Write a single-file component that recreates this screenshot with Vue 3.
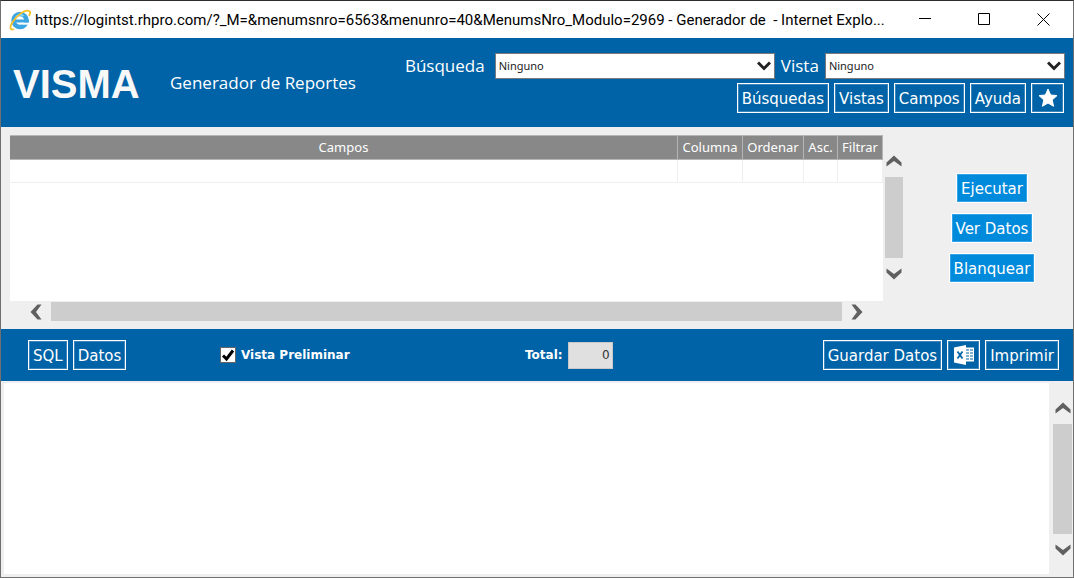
<script setup>
import { ref } from 'vue'

const busqueda = ref('Ninguno')
const vista = ref('Ninguno')
const preview = ref(true)
const total = ref('0')
const columns = ['Campos', 'Columna', 'Ordenar', 'Asc.', 'Filtrar']
</script>

<template>
  <div class="window">
    <header class="titlebar">
      <svg class="ie" viewBox="0 0 22 22" aria-hidden="true">
        <circle cx="11" cy="11.500" r="6.500" fill="none" stroke="#3aa5e0" stroke-width="4.500" />
        <path d="M6 12h14" stroke="#3aa5e0" stroke-width="3" />
        <path d="M13 14.700h8" stroke="#fff" stroke-width="2" />
        <path d="M6.500 9a5 5 0 0 1 8-2" fill="none" stroke="#9adcf8" stroke-width="1.500" />
        <path d="M5 20C2 22 0 19 3 14C7 7 16 0 20 2C22 3 21 5 20 7" fill="none" stroke="#f5c22b" stroke-width="1.800" />
      </svg>
      <h1 class="caption">https://logintst.rhpro.com/?_M=&amp;menumsnro=6563&amp;menunro=40&amp;MenumsNro_Modulo=2969 - Generador de&nbsp; - Internet Explo...</h1>
      <div class="controls">
        <button type="button" aria-label="Minimizar"><svg viewBox="0 0 13 13"><path d="M0 5.500h12" /></svg></button>
        <button type="button" aria-label="Maximizar"><svg viewBox="0 0 13 13"><path d="M.5.5h11v11H.5z" /></svg></button>
        <button type="button" aria-label="Cerrar"><svg viewBox="0 0 13 13"><path d="M.5.5l12 12M12.500.5l-12 12" /></svg></button>
      </div>
    </header>

    <section class="banner">
      <div class="logo">VISMA</div>
      <h2 class="title">Generador de Reportes</h2>
      <div class="pickers">
        <div class="selects">
          <label for="busqueda">Búsqueda</label>
          <div class="select wide">
            <select id="busqueda" v-model="busqueda"><option>Ninguno</option></select>
            <svg viewBox="0 0 14 10" aria-hidden="true"><path d="M1 1.500L7 7.500L13 1.500" /></svg>
          </div>
          <label for="vista">Vista</label>
          <div class="select">
            <select id="vista" v-model="vista"><option>Ninguno</option></select>
            <svg viewBox="0 0 14 10" aria-hidden="true"><path d="M1 1.500L7 7.500L13 1.500" /></svg>
          </div>
        </div>
        <nav class="actions">
          <button type="button" class="btn">Búsquedas</button>
          <button type="button" class="btn">Vistas</button>
          <button type="button" class="btn">Campos</button>
          <button type="button" class="btn">Ayuda</button>
          <button type="button" class="btn icon" aria-label="Favoritos">
            <svg viewBox="0 0 20 20"><path d="M10 1l2.600 6 6.400.6-4.800 4.300 1.400 6.400L10 15l-5.600 3.300 1.400-6.400L1 7.600 7.400 7z" fill="#fff" stroke="#fff" stroke-linejoin="round" /></svg>
          </button>
        </nav>
      </div>
    </section>

    <main class="work">
      <div class="grid">
        <div class="sheet">
          <table>
            <thead>
              <tr><th v-for="c in columns" :key="c" scope="col">{{ c }}</th></tr>
            </thead>
            <tbody>
              <tr><td v-for="c in columns" :key="c"></td></tr>
            </tbody>
          </table>
        </div>
        <div class="vbar">
          <svg viewBox="0 0 16 12"><path d="M.5 11.500V7.500L8 .5l7.500 7v4L8 6z" /></svg>
          <div class="thumb"></div>
          <svg viewBox="0 0 16 12"><path d="M.5.5v4l7.500 7 7.500-7v-4L8 6z" /></svg>
        </div>
        <div class="hbar">
          <svg viewBox="0 0 12 16"><path d="M11.500.5h-4L.5 8l7 7.500h4L6 8z" /></svg>
          <div class="thumb"></div>
          <svg viewBox="0 0 12 16"><path d="M.5.5h4l7 7.500-7 7.500h-4L6 8z" /></svg>
        </div>
      </div>
      <div class="side">
        <button type="button" class="btn bright">Ejecutar</button>
        <button type="button" class="btn bright">Ver Datos</button>
        <button type="button" class="btn bright">Blanquear</button>
      </div>
    </main>

    <section class="toolbar">
      <div class="group">
        <button type="button" class="btn">SQL</button>
        <button type="button" class="btn">Datos</button>
      </div>
      <div class="check">
        <span class="box">
          <input id="preview" v-model="preview" type="checkbox" />
          <svg v-if="preview" viewBox="0 0 16 16" aria-hidden="true"><path d="M3 8.500L6.500 12L13 3.500" /></svg>
        </span>
        <label for="preview">Vista Preliminar</label>
      </div>
      <div class="total">
        <label for="total">Total:</label>
        <input id="total" v-model="total" type="text" readonly />
      </div>
      <div class="group end">
        <button type="button" class="btn">Guardar Datos</button>
        <button type="button" class="btn icon" aria-label="Exportar a Excel">
          <svg viewBox="0 0 20 20">
            <path d="M0 2.500L12 0v20L0 17.500z" fill="#fff" />
            <path d="M3.500 6.500l5 7M8.500 6.500l-5 7" fill="none" stroke="#0063a7" stroke-width="1.800" />
            <path d="M12 3.500h8M12 6.500h8M12 9.500h8M12 12.500h8M12 15.500h8" fill="none" stroke="#fff" stroke-width="2" />
            <path d="M15.500 3v13M19.500 3v13" fill="none" stroke="#fff" />
          </svg>
        </button>
        <button type="button" class="btn">Imprimir</button>
      </div>
    </section>

    <section class="output">
      <div class="page"></div>
      <div class="vbar">
        <svg viewBox="0 0 16 12"><path d="M.5 11.500V7.500L8 .5l7.500 7v4L8 6z" /></svg>
        <div class="thumb"></div>
        <svg viewBox="0 0 16 12"><path d="M.5.5v4l7.500 7 7.500-7v-4L8 6z" /></svg>
      </div>
    </section>
  </div>
</template>

<style>
body {
  margin: 0;
}
</style>

<style scoped>
.window {
  display: flex;
  flex-direction: column;
  min-height: 100vh;
  box-sizing: border-box;
  border: 1px solid #707070;
  border-top-color: #2c2b30;
  background: #efefef;
  color: #fff;
  font-family: "DejaVu Sans", sans-serif;
  font-size: 15px;
}
.window * {
  box-sizing: border-box;
}
button,
input,
select {
  margin: 0;
  font: inherit;
}
svg {
  display: block;
  flex: none;
}
.titlebar {
  display: flex;
  align-items: center;
  height: 37px;
  padding-left: 8px;
  background: #fff;
  color: #000;
}
.ie {
  width: 22px;
  height: 22px;
}
.caption {
  flex: 1;
  min-width: 0;
  margin: 0 0 0 4px;
  overflow: hidden;
  font: 400 15px/20px Roboto, sans-serif;
  white-space: nowrap;
}
.controls {
  display: flex;
}
.controls button {
  display: grid;
  place-items: center;
  width: 59px;
  height: 36px;
  padding: 0;
  border: 0;
  background: none;
}
.controls svg {
  width: 13px;
  height: 13px;
  fill: none;
  stroke: #000;
}
.banner {
  display: flex;
  height: 89px;
  padding: 15px 8px 0 12px;
  background: #0063a7;
}
.logo {
  width: 126px;
  margin-top: 6px;
  color: #f8f8f8;
  font: 700 40px/50px "Liberation Sans", sans-serif;
}
.title {
  margin: 18px 0 0 31px;
  font: 400 17px/24px "Open Sans", sans-serif;
  white-space: nowrap;
}
.pickers {
  flex: 1;
  margin-left: 49px;
}
.selects {
  display: flex;
  align-items: center;
  gap: 6px;
}
.selects label {
  font: 400 17px/24px "Open Sans", sans-serif;
}
.select {
  position: relative;
  flex: 6;
  height: 26px;
}
.select.wide {
  flex: 7;
  margin-left: 4px;
}
select {
  width: 100%;
  height: 26px;
  padding: 0 3px;
  border: 1px solid #7a7a7a;
  border-radius: 0;
  background: #fff;
  color: #222;
  font: 400 11px/20px "Noto Sans", sans-serif;
  appearance: none;
}
.select svg {
  position: absolute;
  top: 8px;
  right: 4px;
  width: 14px;
  height: 10px;
  fill: none;
  stroke: #222;
  stroke-width: 3;
  pointer-events: none;
}
.actions {
  display: flex;
  justify-content: flex-end;
  gap: 5px;
  margin: 4px 1px 0 0;
}
.btn {
  height: 30px;
  padding: 2px 4px 0;
  border: 1px solid #fff;
  border-radius: 0;
  background: #0063a7;
  box-shadow: inset 0 0 0 1px #3a86bc;
  color: #fff;
  font-size: 15px;
  line-height: 26px;
  white-space: nowrap;
}
.btn.icon {
  display: grid;
  place-items: center;
  width: 33px;
  padding: 0;
}
.icon svg {
  width: 20px;
  height: 20px;
}
.btn.bright {
  background: #008adc;
  box-shadow: inset 0 0 0 1px #35a3e6;
}
.work {
  display: flex;
  height: 202px;
  padding: 8px 0 0 9px;
}
.grid {
  flex: 1;
  display: grid;
  grid-template: 166px 20px / 1fr 18px;
  column-gap: 2px;
}
.sheet {
  background: #fff;
}
table {
  width: 100%;
  table-layout: fixed;
  border-collapse: separate;
  border-spacing: 0;
  font: 400 13px/23px "Noto Sans", sans-serif;
}
th {
  height: 25px;
  padding: 0;
  border: 1px solid #b5b5b5;
  border-left: 0;
  background: #888;
  font-weight: 400;
}
th:nth-child(2) {
  width: 65px;
}
th:nth-child(3) {
  width: 61px;
}
th:nth-child(4) {
  width: 34px;
}
th:nth-child(5) {
  width: 45px;
}
td {
  height: 23px;
  padding: 0;
  border: solid #efefef;
  border-width: 0 1px 1px 0;
}
.vbar {
  display: flex;
  flex-direction: column;
  align-items: center;
  gap: 10px;
  padding: 20px 0 21px;
}
.thumb {
  flex: 1;
  background: #cdcdcd;
}
.vbar svg {
  width: 16px;
  height: 12px;
  fill: #606060;
}
.vbar .thumb {
  width: 100%;
}
.hbar {
  display: flex;
  align-items: center;
  gap: 9px;
  padding: 1px 20px 0;
}
.hbar svg {
  width: 12px;
  height: 16px;
  fill: #606060;
}
.hbar .thumb {
  height: 19px;
}
.side {
  display: flex;
  flex-direction: column;
  align-items: center;
  gap: 10px;
  width: 170px;
  padding: 38px 0 0 8px;
}
.toolbar {
  display: grid;
  grid-template-columns: 192fr 305fr 290fr 244fr;
  align-items: center;
  height: 52px;
  padding: 0 14px 0 27px;
  background: #0063a7;
}
.group {
  display: flex;
  gap: 5px;
}
.end {
  justify-content: flex-end;
}
.check,
.total {
  display: flex;
  align-items: center;
  gap: 5px;
  font: 700 12px/16px "DejaVu Sans", sans-serif;
}
.box {
  display: grid;
}
.box > * {
  grid-area: 1 / 1;
  width: 16px;
  height: 16px;
}
.box input {
  border: 1px solid #666;
  background: #fff;
  appearance: none;
}
.box svg {
  fill: none;
  stroke: #000;
  stroke-width: 3;
  pointer-events: none;
}
.total input {
  width: 45px;
  height: 27px;
  padding: 0 2px;
  border: 1px solid #c8c8c8;
  background: #e0e0e0;
  color: #333;
  font: 400 12px/16px "DejaVu Sans", sans-serif;
  text-align: right;
}
.output {
  display: flex;
  flex: 1;
  gap: 4px;
  min-height: 160px;
  padding: 2px 1px 3px 3px;
}
.page {
  flex: 1;
  background: #fff;
}
.output .vbar {
  width: 19px;
  padding: 19px 0 18px;
}
</style>
